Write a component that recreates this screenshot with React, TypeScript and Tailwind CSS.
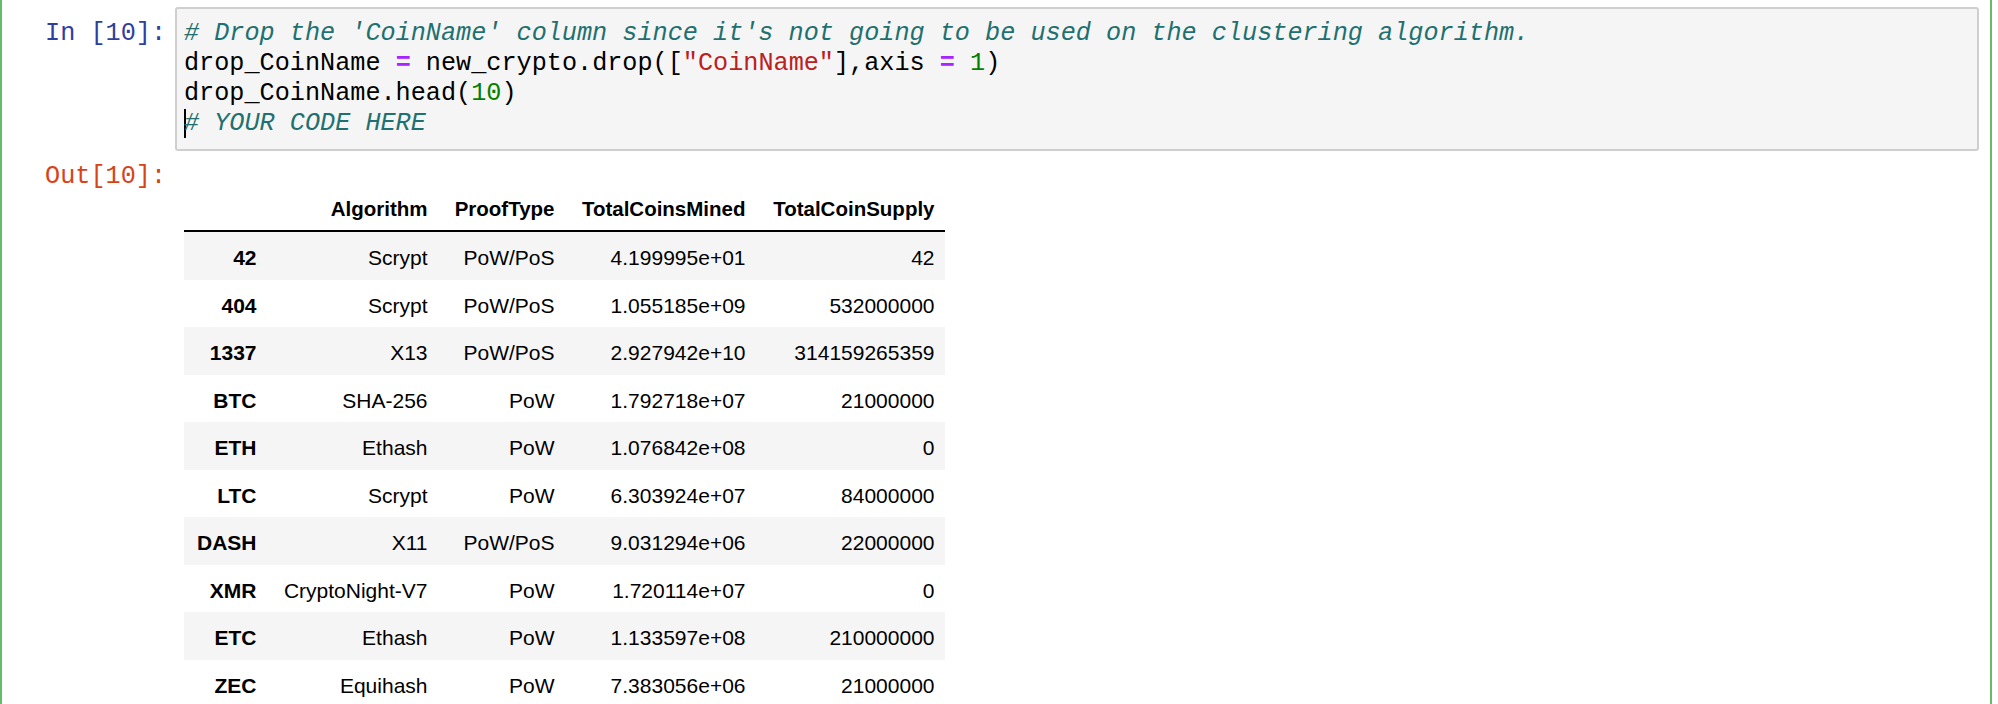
const rows: string[][] = [
  ["42", "Scrypt", "PoW/PoS", "4.199995e+01", "42"],
  ["404", "Scrypt", "PoW/PoS", "1.055185e+09", "532000000"],
  ["1337", "X13", "PoW/PoS", "2.927942e+10", "314159265359"],
  ["BTC", "SHA-256", "PoW", "1.792718e+07", "21000000"],
  ["ETH", "Ethash", "PoW", "1.076842e+08", "0"],
  ["LTC", "Scrypt", "PoW", "6.303924e+07", "84000000"],
  ["DASH", "X11", "PoW/PoS", "9.031294e+06", "22000000"],
  ["XMR", "CryptoNight-V7", "PoW", "1.720114e+07", "0"],
  ["ETC", "Ethash", "PoW", "1.133597e+08", "210000000"],
  ["ZEC", "Equihash", "PoW", "7.383056e+06", "21000000"],
];

const headers = ["", "Algorithm", "ProofType", "TotalCoinsMined", "TotalCoinSupply"];

const mono = "font-['Liberation_Mono','DejaVu_Sans_Mono',monospace] text-[25.2px] leading-[30px]";

export default function App() {
  return (
    <div className="h-[704px] w-[1998px] overflow-hidden bg-white">
      <div className="min-h-[704px] w-[1992px] border-x-2 border-[#66bb6a]">
        {/* Input */}
        <div className="flex pt-[7px]">
          <div className={`w-[173px] shrink-0 pr-[9px] pt-[12px] text-right text-[#303f9f] ${mono}`}>
            In&nbsp;[10]:
          </div>
          <div className={`w-[1804px] rounded-[3px] border-2 border-[#cfcfcf] bg-[#f5f5f5] py-[10px] pl-[7px] whitespace-pre text-black ${mono}`}>
            <div className="italic text-[#1f7070]">
              # Drop the 'CoinName' column since it's not going to be used on the clustering algorithm.
            </div>
            <div>
              drop_CoinName <span className="font-bold text-[#aa22ff]">=</span> new_crypto.drop([
              <span className="text-[#ba2121]">"CoinName"</span>],axis{" "}
              <span className="font-bold text-[#aa22ff]">=</span> <span className="text-[#008000]">1</span>)
            </div>
            <div>
              drop_CoinName.head(<span className="text-[#008000]">10</span>)
            </div>
            <div>
              <span className="-mr-[2px] inline-block h-[29px] w-0 border-l-2 border-black align-middle" />
              <span className="italic text-[#1f7070]"># YOUR CODE HERE</span>
            </div>
          </div>
        </div>

        {/* Output */}
        <div className="mt-[11px] flex">
          <div className={`w-[173px] shrink-0 pr-[9px] text-right text-[#d84315] ${mono}`}>Out[10]:</div>
          <div className="pl-[9px] pt-[20.5px]">
            <table className="w-[761px] table-fixed border-collapse font-['Liberation_Sans',Arial,sans-serif] text-black">
              <colgroup>
                <col className="w-[83px]" />
                <col className="w-[171px]" />
                <col className="w-[127px]" />
                <col className="w-[191px]" />
                <col className="w-[189px]" />
              </colgroup>
              <thead>
                <tr>
                  {headers.map((h, i) => (
                    <th
                      key={i}
                      className="border-b-2 border-black px-[10.5px] pt-[14px] pb-[9.5px] text-right text-[20.5px] leading-[24px] font-bold whitespace-nowrap"
                    >
                      {h}
                    </th>
                  ))}
                </tr>
              </thead>
              <tbody>
                {rows.map((row, r) => (
                  <tr key={row[0]} className={r % 2 === 0 ? "bg-[#f5f5f5]" : "bg-white"}>
                    {row.map((cell, c) => (
                      <td
                        key={c}
                        className={`px-[10.5px] pt-[14px] pb-[9.5px] text-right text-[21px] leading-[24px] whitespace-nowrap ${
                          c === 0 ? "font-bold" : ""
                        }`}
                      >
                        {cell}
                      </td>
                    ))}
                  </tr>
                ))}
              </tbody>
            </table>
          </div>
        </div>
      </div>
    </div>
  );
}
